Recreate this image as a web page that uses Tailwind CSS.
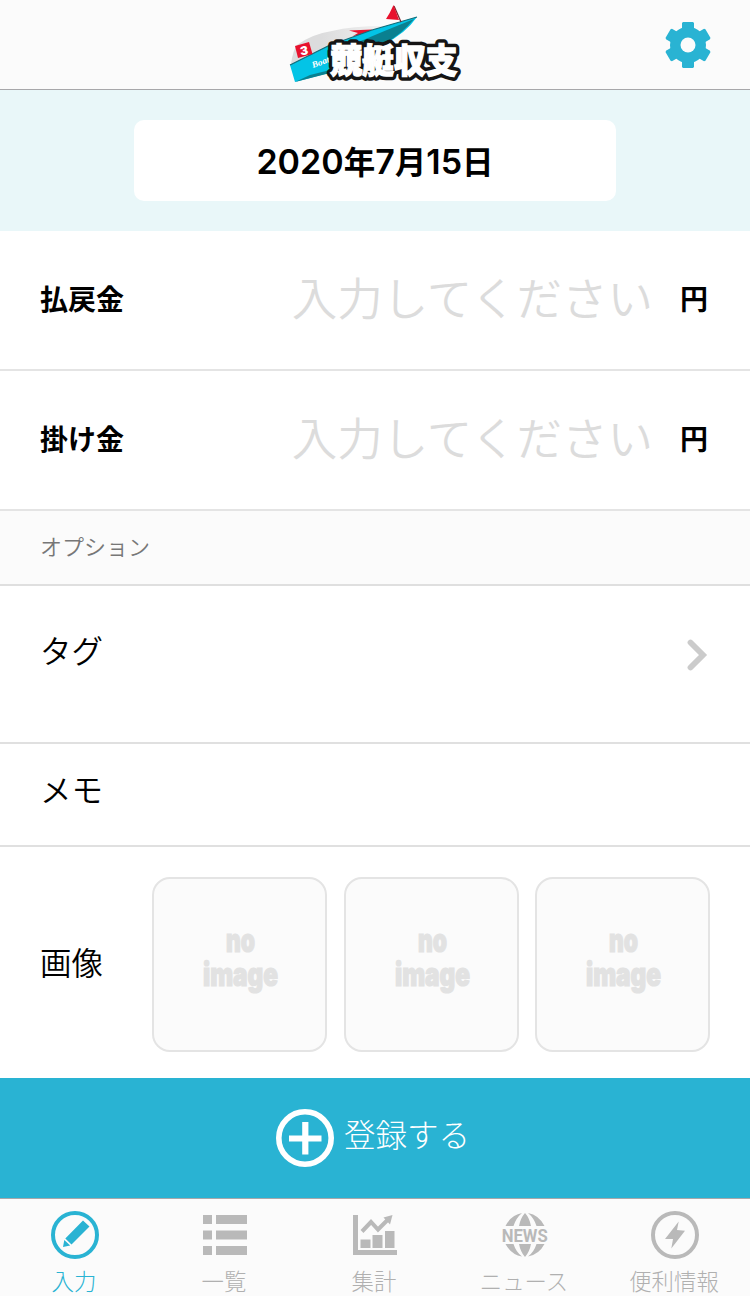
<!DOCTYPE html>
<html lang="ja">

<head>
    <meta charset="UTF-8">
    <meta name="viewport" content="width=device-width, initial-scale=1.0">
    <title>競艇収支</title>
    <script src="https://cdn.jsdelivr.net/npm/@tailwindcss/browser@4"></script>
</head>

<body class="bg-white text-black font-['Inter','Noto_Sans_CJK_JP',sans-serif]">

    <div class="flex flex-col w-[750px] h-[1296px] overflow-hidden">

        <!-- Header -->
        <header class="grid grid-cols-3 items-center h-[90px] shrink-0 bg-[#fbfbfb] border-b border-[#a7a7aa]">
            <div></div>
            <svg class="justify-self-center w-[190px] h-[89px]" viewBox="0 0 190 89">
                <defs>
                    <linearGradient id="deck">
                        <stop offset="0.300" stop-color="#dcdcdd" />
                        <stop offset="1" stop-color="#f4f4f4" />
                    </linearGradient>
                    <text id="logo" x="50.500" y="73" font-size="34" font-weight="900" textLength="127" lengthAdjust="spacingAndGlyphs" font-family="Noto Sans CJK JP">競艇収支</text>
                </defs>
                <path d="M11 64 Q13 50 17 45 Q32 34 52 31 Q72 26 104 26 L112 28 L60 46Z" fill="url(#deck)" />
                <path d="M69 30.500 L92 29.500 L88 34 L73 36 L78 33Z" fill="#e8112d" />
                <path d="M10 65 L48 46 L92 30 L137 17 Q125 34 104 44 L60 70 L15 82Z" fill="#03c4e6" />
                <path d="M76 43 Q104 31 134 19 Q122 34 104 44Z" fill="#0a8090" />
                <path d="M10 65 L48 46 L92 30 L137 17" fill="none" stroke="#126b78" stroke-width="1.200" />
                <path d="M15 82 L30 75 L50 70 L50 73Z" fill="#0a8090" />
                <path d="M114 6 L121 22" stroke="#7c2530" stroke-width="1.200" />
                <path d="M113.500 5 Q110 13 106 19 L119 20Z" fill="#e8112d" />
                <path d="M15 46 L29 42 L32.500 54 L18 58Z" fill="#e8112d" />
                <text x="20" y="55" font-size="12" font-weight="900" fill="#fff" transform="rotate(-9 24 50)">3</text>
                <text x="33" y="68" font-size="9" font-weight="700" font-style="italic" fill="#fff" font-family="Liberation Serif" textLength="18" lengthAdjust="spacingAndGlyphs" transform="rotate(-20 33 68)">Boat</text>
                <use href="#logo" fill="#151515" stroke="#151515" stroke-width="8.500" stroke-linejoin="round" />
                <use href="#logo" fill="#fff" stroke="#fff" stroke-width="1.300" />
            </svg>
            <svg class="justify-self-end mr-[39px] w-[46px] h-[48px]" viewBox="0 0 46 48">
                <g fill="#29b3d3">
                    <path d="M17 2 L18 1 H28 L29 2 V8 L31 12 V36 L29 40 V46 L28 47 H18 L17 46 V40 L15 36 V12 L17 8Z" />
                    <path d="M17 2 L18 1 H28 L29 2 V8 L31 12 V36 L29 40 V46 L28 47 H18 L17 46 V40 L15 36 V12 L17 8Z" transform="rotate(60 23 24)" />
                    <path d="M17 2 L18 1 H28 L29 2 V8 L31 12 V36 L29 40 V46 L28 47 H18 L17 46 V40 L15 36 V12 L17 8Z" transform="rotate(120 23 24)" />
                    <circle cx="23" cy="24" r="18" />
                </g>
                <circle cx="23" cy="24" r="7.500" fill="#fbfbfb" />
            </svg>
        </header>

        <!-- Date -->
        <div class="flex justify-center items-center h-[141px] shrink-0 bg-[#e9f7f9]">
            <button class="w-[482px] h-[81px] pt-px rounded-[10px] bg-white text-[34px] font-semibold whitespace-nowrap">2020<span class="text-[31.500px]">年</span>7<span class="text-[31.500px]">月</span>15<span class="text-[31.500px]">日</span></button>
        </div>

        <!-- Amounts -->
        <div class="flex items-center h-[140px] shrink-0 pl-10 pr-[42px] border-b-2 border-[#e4e4e4]">
            <span class="text-[28px] font-bold">払戻金</span>
            <span class="ml-auto text-[45.500px] font-[350] text-[#dcdcdc]">入力してください</span>
            <span class="ml-[27px] text-[28px] font-bold">円</span>
        </div>
        <div class="flex items-center h-[140px] shrink-0 pl-10 pr-[42px] border-b-2 border-[#e4e4e4]">
            <span class="text-[28px] font-bold">掛け金</span>
            <span class="ml-auto text-[45.500px] font-[350] text-[#dcdcdc]">入力してください</span>
            <span class="ml-[27px] text-[28px] font-bold">円</span>
        </div>

        <!-- Options -->
        <div class="flex items-center h-[75px] shrink-0 px-10 bg-[#fbfbfb] border-b-2 border-[#dfdfdf] text-[22px] font-[350] text-[#777]">オプション</div>
        <div class="flex items-start justify-between h-[158px] shrink-0 pl-10 pr-[42px] border-b-2 border-[#e0e0e0]">
            <span class="mt-[43px] text-[31.500px] leading-[46px] font-[350]">タグ</span>
            <svg class="mt-[52px] w-[22px] h-[34px]" viewBox="0 0 22 34">
                <path d="M4.500 4.500 L17 17 L4.500 29.500" fill="none" stroke="#cbcbcb" stroke-width="5.800" stroke-linecap="round" />
            </svg>
        </div>
        <div class="flex items-center h-[103px] shrink-0 px-10 pb-2 border-b-2 border-[#e0e0e0] text-[31.500px] font-[350]">メモ</div>

        <!-- Images -->
        <div class="flex items-center h-[231px] shrink-0 px-10">
            <span class="w-[112px] pt-0.5 text-[31.500px] font-[350]">画像</span>
            <div class="flex flex-1 justify-between pt-1">
                <div class="w-[175px] h-[175px] rounded-[18px] border-2 border-[#e4e4e4] bg-[#fbfbfb]">
                    <svg class="w-[171px] h-[171px]" viewBox="0 0 171 171" fill="#e2e2e2" stroke="#e2e2e2" stroke-width="1.200" font-size="32" font-weight="900" text-anchor="middle">
                        <text x="86.500" y="72.500" textLength="29" lengthAdjust="spacingAndGlyphs">no</text>
                        <text x="86.500" y="107" textLength="75" lengthAdjust="spacingAndGlyphs">image</text>
                    </svg>
                </div>
                <div class="w-[175px] h-[175px] rounded-[18px] border-2 border-[#e4e4e4] bg-[#fbfbfb]">
                    <svg class="w-[171px] h-[171px]" viewBox="0 0 171 171" fill="#e2e2e2" stroke="#e2e2e2" stroke-width="1.200" font-size="32" font-weight="900" text-anchor="middle">
                        <text x="86.500" y="72.500" textLength="29" lengthAdjust="spacingAndGlyphs">no</text>
                        <text x="86.500" y="107" textLength="75" lengthAdjust="spacingAndGlyphs">image</text>
                    </svg>
                </div>
                <div class="w-[175px] h-[175px] rounded-[18px] border-2 border-[#e4e4e4] bg-[#fbfbfb]">
                    <svg class="w-[171px] h-[171px]" viewBox="0 0 171 171" fill="#e2e2e2" stroke="#e2e2e2" stroke-width="1.200" font-size="32" font-weight="900" text-anchor="middle">
                        <text x="86.500" y="72.500" textLength="29" lengthAdjust="spacingAndGlyphs">no</text>
                        <text x="86.500" y="107" textLength="75" lengthAdjust="spacingAndGlyphs">image</text>
                    </svg>
                </div>
            </div>
        </div>

        <!-- Submit -->
        <button class="flex items-center justify-center gap-2.5 h-[120px] shrink-0 pr-1 bg-[#29b3d3] text-white">
            <svg class="w-[58px] h-[58px]" viewBox="0 0 58 58" fill="none" stroke="#fff">
                <circle cx="29" cy="29" r="26.200" stroke-width="5.600" />
                <path d="M13 29.500 H45.500 M29.300 13 V45.500" stroke-width="6.200" />
            </svg>
            <span class="pb-1 text-[31.500px] font-light">登録する</span>
        </button>

        <!-- Tab bar -->
        <nav class="grid grid-cols-5 h-[98px] shrink-0 border-t border-[#a7a7aa] bg-[#fbfbfb] text-[22.400px] leading-8 font-light text-[#b0b0b0]">
            <a class="flex flex-col items-center pt-3 gap-[7px] text-[#29b3d3]">
                <svg class="w-12 h-12 shrink-0" viewBox="0 0 48 48">
                    <circle cx="24" cy="24" r="22" fill="none" stroke="#29b3d3" stroke-width="4" />
                    <path d="M32 9.500 L38.500 15.500 L20.500 33.500 L14.300 27.500Z M13.300 29 L19.200 34.500 L12 36Z" fill="#29b3d3" />
                </svg>
                <span class="pr-0.5">入力</span>
            </a>
            <a class="flex flex-col items-center pt-3 gap-[7px]">
                <svg class="w-12 h-12 shrink-0" viewBox="0 0 48 48" fill="#b9b9b9">
                    <path d="M2 4h9v9H2z M15 4h31v9H15z M2 19.500h9v9H2z M15 19.500h31v9H15z M2 35h9v9H2z M15 35h31v9H15z" />
                </svg>
                <span class="pr-0.5">一覧</span>
            </a>
            <a class="flex flex-col items-center pt-3 gap-[7px]">
                <svg class="w-12 h-12 shrink-0" viewBox="0 0 48 48" fill="#b9b9b9">
                    <path d="M2 4h5v35h39v5H2z" />
                    <path d="M9.500 28.500h10v8.500h-10z M21.500 24h10v13h-10z M34 20h9.500v17H34z" />
                    <path d="M11 20.500 L20 11 L27 18.500 L37.500 8" fill="none" stroke="#b9b9b9" stroke-width="4" />
                    <path d="M41.500 4 L32.500 6.500 L39 13.500Z" />
                </svg>
                <span class="pr-0.5">集計</span>
            </a>
            <a class="flex flex-col items-center pt-3 gap-[7px]">
                <svg class="w-12 h-12 shrink-0" viewBox="0 0 48 48" fill="#b9b9b9">
                    <path d="M4.500 15 Q10 4 21 2 Q15 7 12.500 15Z M43.500 15 Q38 4 27 2 Q33 7 35.500 15Z" />
                    <path d="M18 15 H30 Q28.500 7 24 2 Q19.500 7 18 15Z M18 33 H30 Q28.500 41 24 46 Q19.500 41 18 33Z" />
                    <path d="M4.500 33 Q10 43.500 21 45.500 Q15 41 12.500 33Z M43.500 33 Q38 43.500 27 45.500 Q33 41 35.500 33Z" />
                    <text x="23.700" y="30.500" font-family="Roboto" font-size="18.500" font-weight="700" text-anchor="middle" textLength="46" lengthAdjust="spacingAndGlyphs">NEWS</text>
                </svg>
                <span class="pr-0.5">ニュース</span>
            </a>
            <a class="flex flex-col items-center pt-3 gap-[7px]">
                <svg class="w-12 h-12 shrink-0" viewBox="0 0 48 48">
                    <circle cx="24" cy="24" r="22" fill="none" stroke="#b9b9b9" stroke-width="4" />
                    <path d="M27.700 10.500 L14 28 L22 28 L20.300 37.500 L34 19.700 L26 19Z" fill="#b9b9b9" />
                </svg>
                <span class="pr-0.5">便利情報</span>
            </a>
        </nav>
    </div>

</body>

</html>
